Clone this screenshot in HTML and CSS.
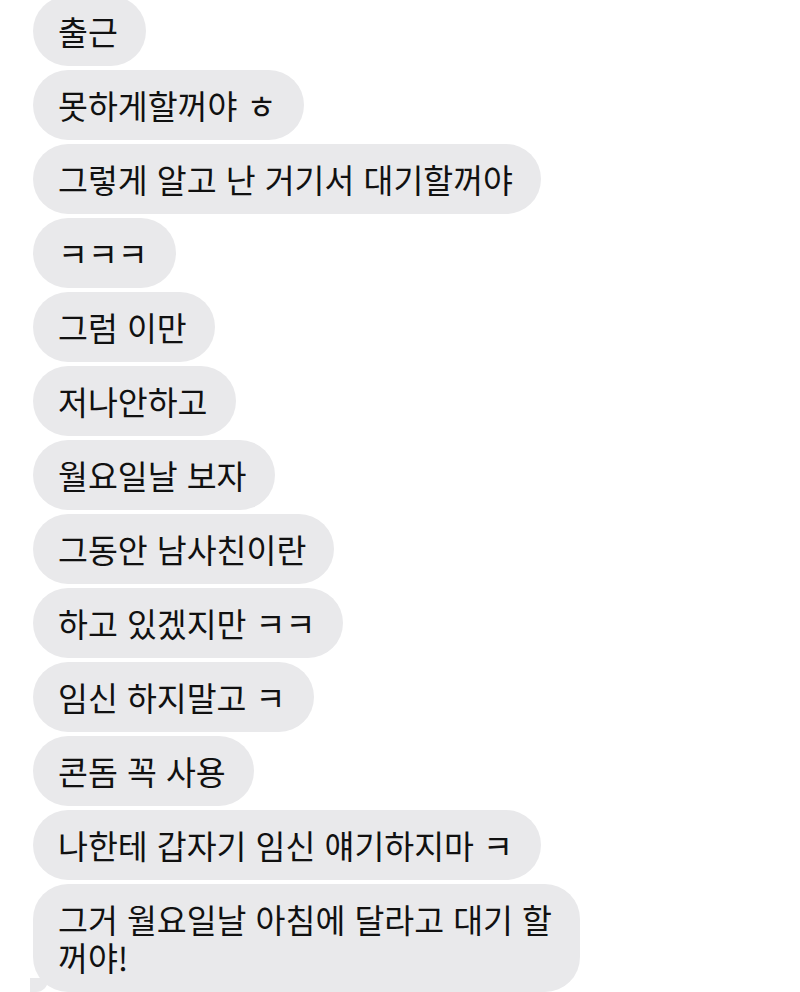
FILE: index.html
```html
<!DOCTYPE html>
<html lang="ko">
<head>
  <meta charset="UTF-8">
  <title>메시지</title>
  <link rel="stylesheet" href="styles.css">
</head>
<body>

  <div class="thread">
    <div class="bubble">출근</div>
    <div class="bubble">못하게할꺼야 ㅎ</div>
    <div class="bubble">그렇게 알고 난 거기서 대기할꺼야</div>
    <div class="bubble">ㅋㅋㅋ</div>
    <div class="bubble">그럼 이만</div>
    <div class="bubble">저나안하고</div>
    <div class="bubble">월요일날 보자</div>
    <div class="bubble">그동안 남사친이란</div>
    <div class="bubble">하고 있겠지만 ㅋㅋ</div>
    <div class="bubble">임신 하지말고 ㅋ</div>
    <div class="bubble">콘돔 꼭 사용</div>
    <div class="bubble">나한테 갑자기 임신 얘기하지마 ㅋ</div>
    <div class="bubble last">그거 월요일날 아침에 달라고 대기 할<br>꺼야!</div>
  </div>

</body>
</html>
```

FILE: styles.css
```css
body {
  margin: 0;
  padding: 0;
  background-color: #fff;
  font-family: "Noto Sans CJK KR", "Noto Sans", sans-serif;
  overflow: hidden;
}

.thread {
  display: flex;
  flex-direction: column;
  align-items: flex-start;
  gap: 4px;
  padding-left: 33px;
  margin-top: -4px;
}

.bubble {
  box-sizing: border-box;
  max-width: 600px;
  min-height: 70px;
  padding: 16px 28px 16px 25px;
  background-color: #e9e9eb;
  border-radius: 35px;
  color: #111;
  font-size: 32.5px;
  line-height: 38px;
  white-space: nowrap;
}

.last {
  position: relative;
}

/* little tail under the last message */
.last::after {
  content: "";
  position: absolute;
  left: -3px;
  bottom: 0;
  width: 18px;
  height: 14px;
  background-color: #e9e9eb;
  border-bottom-right-radius: 12px;
}
```
